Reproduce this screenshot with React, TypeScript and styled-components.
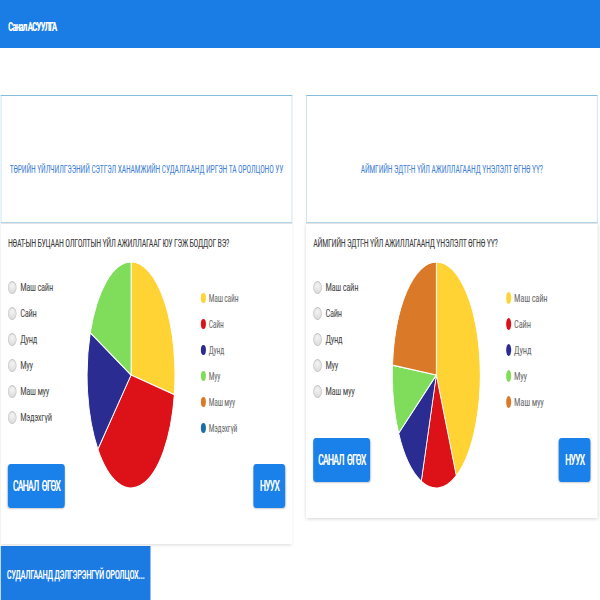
import React from "react";
import styled, { createGlobalStyle } from "styled-components";

const GlobalStyle = createGlobalStyle`
  html, body { margin: 0; padding: 0; background: #ffffff; overflow: hidden; }
  body { font-family: "Roboto Condensed", Roboto, "Liberation Sans", sans-serif; }
`;

/* The reference is a squeezed capture of a wider page: it is laid out at 834px and narrowed to 600px. */
const Stage = styled.div`
  width: 834px;
  transform: scaleX(0.72);
  transform-origin: 0 0;
`;

const TopBar = styled.header`
  height: 48px;
  background: #1a7de6;
  display: flex;
  align-items: center;
  padding-left: 11px;
`;

const Brand = styled.h1`
  margin: 0;
  font-size: 13px;
  font-weight: 700;
  letter-spacing: -1.4px;
  color: #ffffff;
  padding-top: 4px;
`;

const Cards = styled.main`
  display: grid;
  grid-template-columns: 405px 405px;
  column-gap: 19px;
  align-items: start;
  padding: 47px 0 0 1px;
`;

const Card = styled.section`
  display: flex;
  flex-direction: column;
`;

const CardHead = styled.div`
  height: 128px;
  box-sizing: border-box;
  border: 1px solid #b8dcef;
  border-top-color: #86bddb;
  padding: 66px 4px 0;
  text-align: center;
`;

const HeadTitle = styled.h2`
  margin: 0;
  font-size: 10.5px;
  line-height: 16px;
  font-weight: 400;
  letter-spacing: -0.15px;
  white-space: nowrap;
  color: #3f7fd4;
`;

const CardBody = styled.div`
  border-top: 1px solid #e2e2e2;
  box-shadow: 0 1px 4px rgba(0, 0, 0, 0.16);
  padding: 12px 10px 36px;
  background: #ffffff;
`;

const Question = styled.p`
  margin: 0 0 10px;
  font-size: 11px;
  line-height: 16px;
  letter-spacing: -0.35px;
  color: #3a3a3a;
`;

const Poll = styled.div`
  display: grid;
  grid-template-columns: 110px 122px 1fr auto;
  grid-template-rows: auto auto;
`;

const Options = styled.ul`
  grid-column: 1;
  grid-row: 1;
  list-style: none;
  margin: 0;
  padding: 12px 0 0;
`;

const Option = styled.li`
  height: 26px;
  display: flex;
  align-items: center;
  gap: 5px;
  font-size: 11.8px;
  letter-spacing: -0.4px;
  color: #4a4a4a;
`;

const Radio = styled.span`
  width: 10px;
  height: 11px;
  border-radius: 50%;
  border: 1px solid #c4c4c4;
  background: radial-gradient(circle at 50% 35%, #f4f4f4 0%, #d6d6d6 100%);
  flex: none;
`;

const PieBox = styled.div`
  grid-column: 2;
  grid-row: 1 / span 2;
  height: 226px;
  margin-bottom: -30px;
  svg {
    display: block;
    width: 122px;
    height: 226px;
  }
`;

const Legend = styled.ul`
  grid-column: 3;
  grid-row: 1 / span 2;
  list-style: none;
  margin: 0;
  padding: 23px 0 0 36px;
`;

const LegendItem = styled.li<{ $size: number }>`
  height: 26px;
  display: flex;
  align-items: center;
  gap: 4px;
  font-size: ${(p) => p.$size}px;
  letter-spacing: -0.3px;
  color: #6a6a6a;
`;

const Dot = styled.span<{ $c: string; $h: number }>`
  width: 7px;
  height: ${(p) => p.$h}px;
  border-radius: 50%;
  background: ${(p) => p.$c};
  flex: none;
`;

const Button = styled.button`
  height: 44px;
  border: none;
  border-radius: 4px;
  background: #1a80ea;
  color: #ffffff;
  font-family: inherit;
  font-size: 14.5px;
  font-weight: 500;
  letter-spacing: -1.6px;
  word-spacing: 3px;
  white-space: nowrap;
  padding: 0;
  box-shadow: 0 1px 2px rgba(0, 0, 0, 0.2);
`;

const VoteButton = styled(Button)`
  grid-column: 1;
  grid-row: 2;
  justify-self: start;
  margin-top: 34px;
  width: 79px;
`;

const HideButton = styled(Button)`
  grid-column: 4;
  grid-row: 2;
  margin-top: 34px;
  width: 44px;
`;

const MoreBar = styled.button`
  display: block;
  margin: 2px 0 0 1px;
  width: 208px;
  height: 58px;
  border: none;
  background: #1b7be2;
  color: #ffffff;
  font-family: inherit;
  font-size: 12px;
  font-weight: 500;
  letter-spacing: -0.6px;
  white-space: nowrap;
  text-align: center;
  padding: 0;
`;

type Slice = { color: string; from: number; to: number };

const pt = (a: number) => {
  const r = (a * Math.PI) / 180;
  return `${(100 + 100 * Math.sin(r)).toFixed(2)} ${(100 - 100 * Math.cos(r)).toFixed(2)}`;
};

function Pie({ slices }: { slices: Slice[] }) {
  return (
    <svg viewBox="0 0 200 200" preserveAspectRatio="none">
      {slices.map((s, i) => (
        <path
          key={i}
          d={`M100 100 L${pt(s.from)} A100 100 0 ${s.to - s.from > 180 ? 1 : 0} 1 ${pt(s.to)} Z`}
          fill={s.color}
          stroke="#ffffff"
          strokeWidth={1.2}
          vectorEffect="non-scaling-stroke"
        />
      ))}
    </svg>
  );
}

const C = {
  yellow: "#fed333",
  red: "#dc1218",
  navy: "#2b2c92",
  green: "#80dd5c",
  orange: "#da7a28",
  teal: "#1c6ea6",
};

const answers = [
  { label: "Маш сайн", color: C.yellow },
  { label: "Сайн", color: C.red },
  { label: "Дунд", color: C.navy },
  { label: "Муу", color: C.green },
  { label: "Маш муу", color: C.orange },
  { label: "Мэдэхгүй", color: C.teal },
];

type PollData = {
  title: string;
  question: string;
  count: number;
  legendSize: number;
  dotH: number;
  slices: Slice[];
};

const polls: PollData[] = [
  {
    title: "ТӨРИЙН ҮЙЛЧИЛГЭЭНИЙ СЭТГЭЛ ХАНАМЖИЙН СУДАЛГААНД ИРГЭН ТА ОРОЛЦОНО УУ",
    question: "НӨАТ-ЫН БУЦААН ОЛГОЛТЫН ҮЙЛ АЖИЛЛАГААГ ЮУ ГЭЖ БОДДОГ ВЭ?",
    count: 6,
    legendSize: 10.5,
    dotH: 10,
    slices: [
      { color: C.yellow, from: 0, to: 100 },
      { color: C.red, from: 100, to: 229 },
      { color: C.navy, from: 229, to: 292 },
      { color: C.green, from: 292, to: 360 },
    ],
  },
  {
    title: "АЙМГИЙН ЭДТГ-Н ҮЙЛ АЖИЛЛАГААНД ҮНЭЛЭЛТ ӨГНӨ ҮҮ?",
    question: "АЙМГИЙН ЭДТГ-Н ҮЙЛ АЖИЛЛАГААНД ҮНЭЛЭЛТ ӨГНӨ ҮҮ?",
    count: 5,
    legendSize: 11.8,
    dotH: 12,
    slices: [
      { color: C.yellow, from: 0, to: 153 },
      { color: C.red, from: 153, to: 200 },
      { color: C.navy, from: 200, to: 239 },
      { color: C.green, from: 239, to: 275 },
      { color: C.orange, from: 275, to: 360 },
    ],
  },
];

function PollCard({ data }: { data: PollData }) {
  const items = answers.slice(0, data.count);
  return (
    <Card>
      <CardHead>
        <HeadTitle>{data.title}</HeadTitle>
      </CardHead>
      <CardBody>
        <Question>{data.question}</Question>
        <Poll>
          <Options>
            {items.map((a) => (
              <Option key={a.label}>
                <Radio />
                {a.label}
              </Option>
            ))}
          </Options>
          <PieBox>
            <Pie slices={data.slices} />
          </PieBox>
          <Legend>
            {items.map((a) => (
              <LegendItem key={a.label} $size={data.legendSize}>
                <Dot $c={a.color} $h={data.dotH} />
                {a.label}
              </LegendItem>
            ))}
          </Legend>
          <VoteButton>САНАЛ ӨГӨХ</VoteButton>
          <HideButton>НУУХ</HideButton>
        </Poll>
      </CardBody>
    </Card>
  );
}

export default function App() {
  return (
    <Stage>
      <GlobalStyle />
      <TopBar>
        <Brand>Санал АСУУЛГА</Brand>
      </TopBar>
      <Cards>
        {polls.map((p) => (
          <PollCard key={p.title} data={p} />
        ))}
      </Cards>
      <MoreBar>СУДАЛГААНД ДЭЛГЭРЭНГҮЙ ОРОЛЦОХ...</MoreBar>
    </Stage>
  );
}
